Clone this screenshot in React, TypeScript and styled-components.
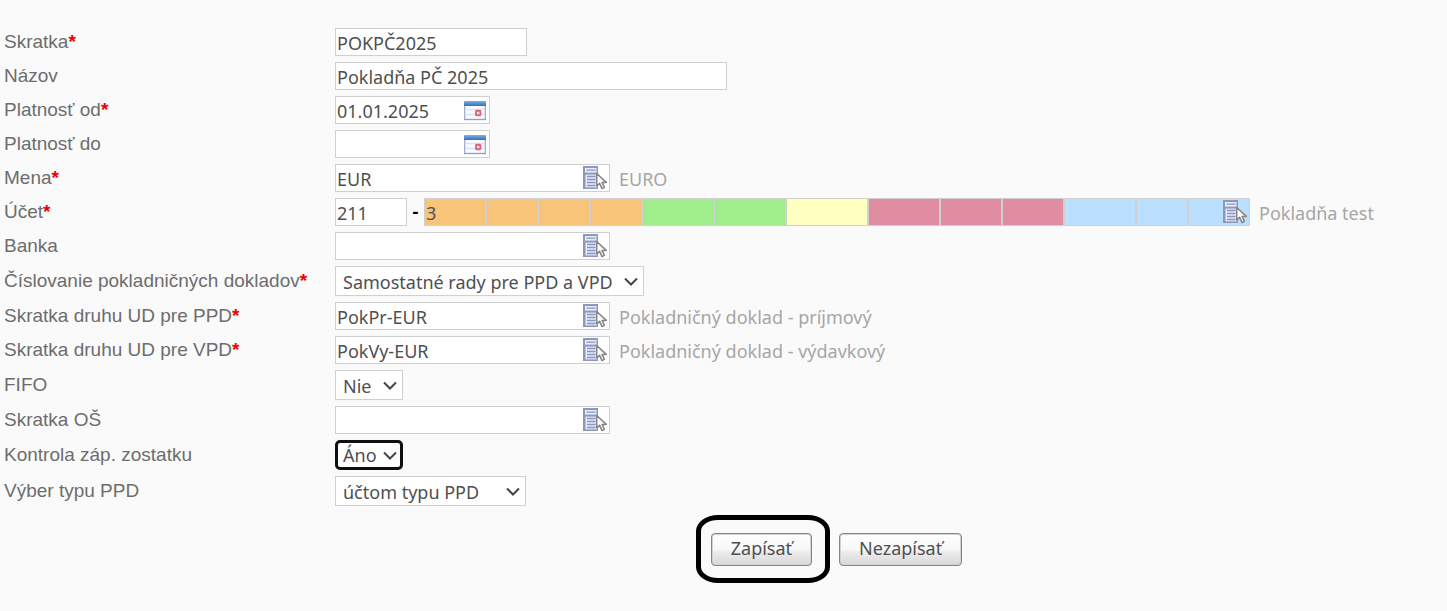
import React from "react";
import styled, { createGlobalStyle, css } from "styled-components";

const GlobalStyle = createGlobalStyle`
  *, *::before, *::after { box-sizing: border-box; }
  body {
    margin: 0;
    background: #fafafa;
    color: #4f4f4f;
    font-family: "Liberation Sans", Arial, sans-serif;
    font-size: 19px;
  }
`;

const fieldFont = css`
  font-family: "Noto Sans", Tahoma, sans-serif;
  font-size: 18px;
  line-height: 24px;
  color: #4f4f4f;
`;

const Form = styled.form`
  padding: 28px 4px;
`;

const Rows = styled.div`
  display: grid;
  gap: 6px;
`;

const Row = styled.div`
  display: grid;
  grid-template-columns: 331px minmax(0, 1fr);
  align-items: center;
`;

const Label = styled.label`
  color: #6d6d6d;
  line-height: 22px;
  white-space: nowrap;
`;

const Required = styled.b`
  color: #f00000;
`;

const Controls = styled.div`
  display: flex;
  align-items: center;
`;

const TextInput = styled.input<{ $width: number; $tone?: string }>`
  ${fieldFont}
  display: block;
  flex: none;
  width: ${(p) => p.$width}px;
  height: 28px;
  padding: 2px 1px 0;
  border: 1px solid #d0d0d0;
  border-radius: 0;
  background: ${(p) => p.$tone ?? "#ffffff"};
  outline: none;
`;

const FieldBox = styled.div`
  position: relative;
  display: flex;
  flex: none;
`;

const IconButton = styled.button`
  position: absolute;
  top: 2px;
  right: 3px;
  display: flex;
  padding: 0;
  border: 0;
  background: none;
  cursor: pointer;
`;

const Dash = styled.span`
  width: 17px;
  text-align: center;
  font-weight: bold;
  color: #000000;
`;

const Note = styled.span`
  ${fieldFont}
  color: #a6a6a6;
  margin-left: 9px;
  padding-top: 2px;
  white-space: nowrap;
`;

const SelectInput = styled.select<{ $width: number; $focused?: boolean }>`
  ${fieldFont}
  appearance: none;
  width: ${(p) => p.$width}px;
  height: 30px;
  padding: 2px 22px 0 7px;
  border: 1px solid #d0d0d0;
  border-radius: 0;
  background: #ffffff;
  outline: none;
  ${(p) =>
    p.$focused &&
    css`
      padding: 0 20px 0 5px;
      border: 3px solid #101010;
      border-radius: 5px;
    `}
`;

const Chevron = styled.svg`
  position: absolute;
  top: 11px;
  right: 5px;
  pointer-events: none;
`;

const Actions = styled.div`
  display: flex;
  justify-content: center;
  align-items: center;
  gap: 9px;
  margin-top: 9px;
  padding-left: 211px;
`;

const Highlight = styled.div`
  padding: 13px 13px 12px 10px;
  border: 5px solid #000000;
  border-radius: 22px / 16px;
`;

const PushButton = styled.button`
  ${fieldFont}
  display: block;
  height: 33px;
  padding: 0 19px 3px;
  border: 1px solid #858585;
  border-radius: 4px;
  background: linear-gradient(#fefefe 0%, #f8f8f8 50%, #ececec 58%, #d8d8d8 100%);
  box-shadow: inset 0 0 0 1px #d2d2d2;
  white-space: nowrap;
`;

function CalendarIcon() {
  return (
    <svg width="23" height="23" viewBox="0 0 23 23" aria-hidden="true">
      <defs>
        <linearGradient id="calHead" x1="0" y1="0" x2="0" y2="1">
          <stop offset="0" stopColor="#7fb0e4" />
          <stop offset="0.5" stopColor="#568fd0" />
          <stop offset="1" stopColor="#3c6cb8" />
        </linearGradient>
      </defs>
      <rect x="0.7" y="4" width="20.6" height="17.5" fill="#fafbff" stroke="#9db5dc" strokeWidth="1.4" />
      <path d="M2 11.5H20M2 16.5H20" stroke="#dae3f5" strokeWidth="1.4" />
      <path d="M0 21.5H22" stroke="#86a3d3" />
      <path d="M0 8V4.5Q0 3 1.5 3H20.5Q22 3 22 4.5V8Z" fill="url(#calHead)" />
      <rect x="12" y="12.8" width="4.4" height="4.4" rx="0.6" fill="#fbe3e5" stroke="#df6378" strokeWidth="1.9" />
    </svg>
  );
}

function PickerIcon() {
  return (
    <svg width="25" height="24" viewBox="0 0 25 24" aria-hidden="true">
      <rect x="1" y="0" width="15" height="23" fill="#8d98c1" />
      <rect x="3" y="2" width="11.5" height="4.6" fill="#e9ecf8" />
      <rect x="3.5" y="8.6" width="11.5" height="12.8" fill="#e9ecf8" />
      <path d="M4.5 4.2H13.5M5 10.5H13.5M5 13.5H13.5M5 16.5H13.5M5 19.5H13.5" stroke="#8995bf" strokeWidth="1.3" />
      <path
        d="M14.7 7.5V20L17.6 17.4L20 22.6L22.4 21.4L20.1 16.6L24.3 16.4Z"
        fill="#fafafa"
        stroke="#858585"
        strokeWidth="1.5"
        strokeLinejoin="round"
      />
    </svg>
  );
}

type FieldProps = { id: string; label: string; required?: boolean; children: React.ReactNode };

function Field({ id, label, required, children }: FieldProps) {
  return (
    <Row>
      <Label htmlFor={id}>
        {label}
        {required && <Required>*</Required>}
      </Label>
      <Controls>{children}</Controls>
    </Row>
  );
}

function DateInput({ id, value }: { id: string; value?: string }) {
  return (
    <FieldBox>
      <TextInput id={id} $width={155} defaultValue={value} />
      <IconButton type="button" aria-label="Kalendár">
        <CalendarIcon />
      </IconButton>
    </FieldBox>
  );
}

function LookupInput({ id, value }: { id: string; value?: string }) {
  return (
    <FieldBox>
      <TextInput id={id} $width={275} defaultValue={value} />
      <IconButton type="button" aria-label="Vybrať">
        <PickerIcon />
      </IconButton>
    </FieldBox>
  );
}

type DropdownProps = { id: string; width: number; options: string[]; focused?: boolean };

function Dropdown({ id, width, options, focused }: DropdownProps) {
  return (
    <FieldBox>
      <SelectInput id={id} $width={width} $focused={focused}>
        {options.map((option) => (
          <option key={option}>{option}</option>
        ))}
      </SelectInput>
      <Chevron width="15" height="10" viewBox="0 0 15 10" aria-hidden="true">
        <path d="M1 1.5L7 7.5L13 1.5" fill="none" stroke="#454545" strokeWidth="2" />
      </Chevron>
    </FieldBox>
  );
}

const ORANGE = "#f8c47a";
const GREEN = "#a0ee8b";
const YELLOW = "#ffffc0";
const RED = "#e18da1";
const BLUE = "#bbdffe";

const segments = [
  { width: 62, tone: ORANGE, value: "3" },
  { width: 52, tone: ORANGE },
  { width: 52, tone: ORANGE },
  { width: 52, tone: ORANGE },
  { width: 72, tone: GREEN },
  { width: 72, tone: GREEN },
  { width: 82, tone: YELLOW },
  { width: 72, tone: RED },
  { width: 62, tone: RED },
  { width: 62, tone: RED },
  { width: 72, tone: BLUE },
  { width: 52, tone: BLUE },
  { width: 62, tone: BLUE },
];

export default function App() {
  return (
    <>
      <GlobalStyle />
      <Form onSubmit={(event) => event.preventDefault()}>
        <Rows>
          <Field id="skratka" label="Skratka" required>
            <TextInput id="skratka" $width={192} defaultValue="POKPČ2025" />
          </Field>
          <Field id="nazov" label="Názov">
            <TextInput id="nazov" $width={392} defaultValue="Pokladňa PČ 2025" />
          </Field>
          <Field id="od" label="Platnosť od" required>
            <DateInput id="od" value="01.01.2025" />
          </Field>
          <Field id="do" label="Platnosť do">
            <DateInput id="do" />
          </Field>
          <Field id="mena" label="Mena" required>
            <LookupInput id="mena" value="EUR" />
            <Note>EURO</Note>
          </Field>
          <Field id="ucet" label="Účet" required>
            <TextInput id="ucet" $width={72} defaultValue="211" />
            <Dash>-</Dash>
            <FieldBox>
              {segments.map((segment, index) => (
                <TextInput
                  key={index}
                  aria-label={`Účet, časť ${index + 1}`}
                  $width={segment.width}
                  $tone={segment.tone}
                  defaultValue={segment.value}
                />
              ))}
              <IconButton type="button" aria-label="Vybrať účet">
                <PickerIcon />
              </IconButton>
            </FieldBox>
            <Note>Pokladňa test</Note>
          </Field>
          <Field id="banka" label="Banka">
            <LookupInput id="banka" />
          </Field>
          <Field id="cislovanie" label="Číslovanie pokladničných dokladov" required>
            <Dropdown id="cislovanie" width={309} options={["Samostatné rady pre PPD a VPD"]} />
          </Field>
          <Field id="ppd" label="Skratka druhu UD pre PPD" required>
            <LookupInput id="ppd" value="PokPr-EUR" />
            <Note>Pokladničný doklad - príjmový</Note>
          </Field>
          <Field id="vpd" label="Skratka druhu UD pre VPD" required>
            <LookupInput id="vpd" value="PokVy-EUR" />
            <Note>Pokladničný doklad - výdavkový</Note>
          </Field>
          <Field id="fifo" label="FIFO">
            <Dropdown id="fifo" width={68} options={["Nie", "Áno"]} />
          </Field>
          <Field id="os" label="Skratka OŠ">
            <LookupInput id="os" />
          </Field>
          <Field id="kontrola" label="Kontrola záp. zostatku">
            <Dropdown id="kontrola" width={68} options={["Áno", "Nie"]} focused />
          </Field>
          <Field id="vyber" label="Výber typu PPD">
            <Dropdown id="vyber" width={191} options={["účtom typu PPD"]} />
          </Field>
        </Rows>
        <Actions>
          <Highlight>
            <PushButton type="submit">Zapísať</PushButton>
          </Highlight>
          <PushButton type="button">Nezapísať</PushButton>
        </Actions>
      </Form>
    </>
  );
}
